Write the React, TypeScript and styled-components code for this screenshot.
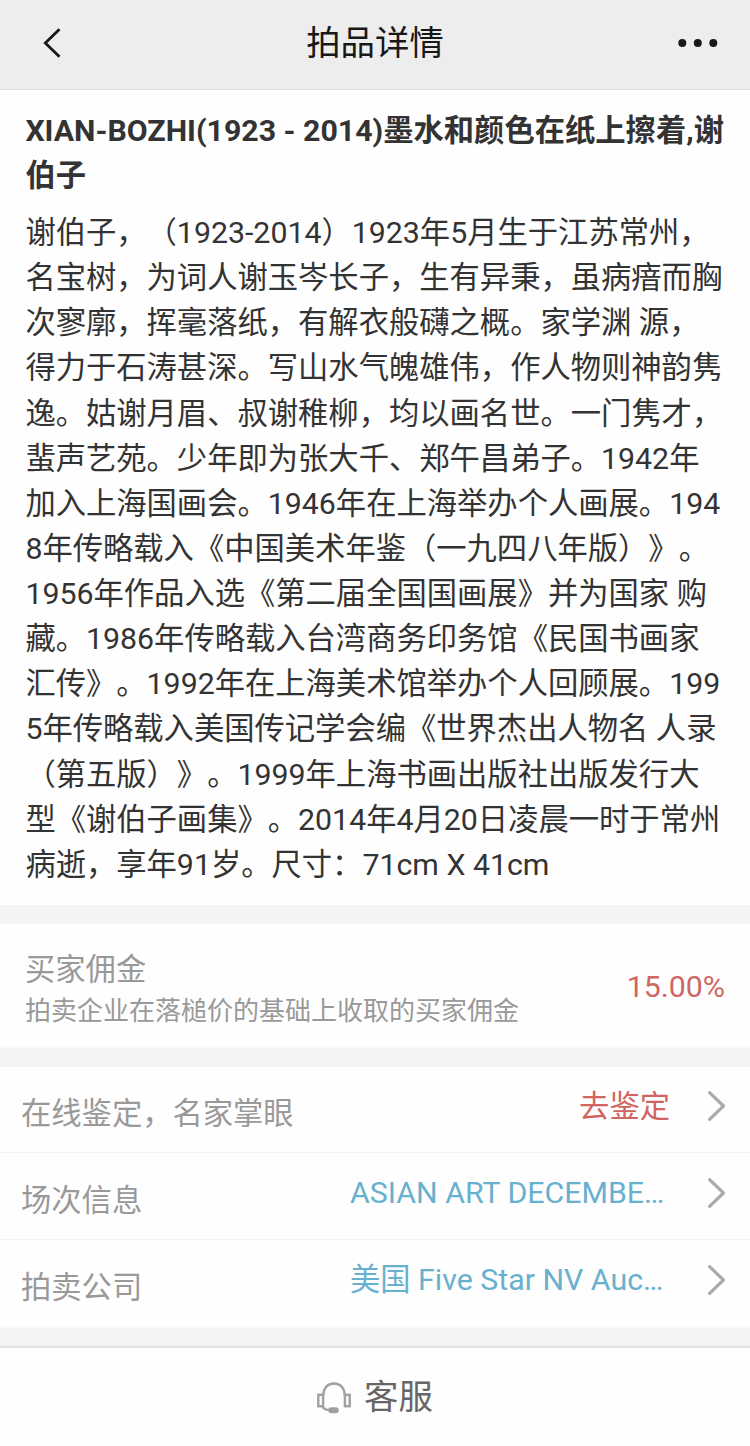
import React from "react";
import styled, { createGlobalStyle } from "styled-components";

const GlobalStyle = createGlobalStyle`
  * { box-sizing: border-box; }
  body {
    margin: 0;
    background: #ffffff;
    font-family: Roboto, "Noto Sans CJK SC", sans-serif;
    color: #333333;
    text-spacing-trim: space-all;
  }
`;

const Page = styled.div`
  display: flex;
  flex-direction: column;
  width: 750px;
  height: 1446px;
  overflow: hidden;
  background: #fefefe;
`;

const Header = styled.header`
  display: grid;
  grid-template-columns: 150px 1fr 150px;
  align-items: center;
  height: 90px;
  flex: none;
  padding-bottom: 4px;
  background: #ededed;
  border-bottom: 1px solid #e2e2e2;
`;

const HeaderTitle = styled.h1`
  margin: 0;
  font-size: 34.4px;
  line-height: 48px;
  font-weight: 400;
  text-align: center;
  color: #181818;
`;

const BackIcon = styled.svg`
  margin-left: 39px;
  display: block;
`;

const MoreIcon = styled.svg`
  justify-self: end;
  margin-right: 30px;
  display: block;
`;

const Article = styled.section`
  height: 815px;
  flex: none;
  padding: 18px 0 0 25.4px;
`;

const LotTitle = styled.h2`
  margin: 0 0 12px;
  font-size: 30.3px;
  line-height: 45px;
  font-weight: 700;
`;

const Description = styled.p`
  margin: 0;
  font-size: 30.3px;
  line-height: 45.12px;
`;

const Line = styled.span`
  display: block;
  white-space: pre;
`;

const Gap = styled.div<{ $size: number; $edge?: boolean }>`
  height: ${(p) => p.$size}px;
  flex: none;
  background: #f4f4f4;
  border-top: ${(p) => (p.$edge ? "2px solid #fafafa" : "0")};
`;

const Commission = styled.section`
  display: flex;
  align-items: center;
  justify-content: space-between;
  height: 122px;
  flex: none;
  padding: 3px 25px 0 25px;
`;

const CommissionText = styled.div`
  padding-top: 7px;
`;

const CommissionLabel = styled.div`
  font-size: 30.3px;
  line-height: 42px;
  color: #999999;
`;

const CommissionNote = styled.div`
  font-size: 26px;
  line-height: 40px;
  color: #999999;
`;

const Rate = styled.div`
  font-size: 30.3px;
  color: #cf6663;
`;

const Row = styled.div<{ $height: number; $last?: boolean }>`
  display: flex;
  align-items: center;
  height: ${(p) => p.$height}px;
  flex: none;
  padding: 0 24px 0 21px;
  border-bottom: ${(p) => (p.$last ? "0" : "1px solid #f5f5f5")};
`;

const RowLabel = styled.div`
  flex: 1;
  padding-top: 8px;
  font-size: 30.3px;
  line-height: 45px;
  color: #999999;
`;

const RowValue = styled.div<{ $tone: "red" | "blue" }>`
  padding-bottom: ${(p) => (p.$tone === "red" ? 7 : 8)}px;
  width: 320px;
  font-size: 30.3px;
  line-height: 45px;
  white-space: nowrap;
  text-align: ${(p) => (p.$tone === "red" ? "right" : "left")};
  color: ${(p) => (p.$tone === "red" ? "#d2635f" : "#68b0cf")};
`;

const Chevron = styled.svg`
  display: block;
  margin: 0 0 7px 36px;
`;

const Footer = styled.footer`
  display: flex;
  justify-content: center;
  align-items: center;
  gap: 12px;
  flex: 1;
  padding: 0 1px 6px 0;
  border-top: 2px solid #e3e3e3;
  font-size: 34.4px;
  color: #666666;
`;

const HeadsetIcon = styled.svg`
  display: block;
  margin-top: 6px;
`;

const descriptionLines = [
  "谢伯子，（1923-2014）1923年5月生于江苏常州，",
  "名宝树，为词人谢玉岑长子，生有异秉，虽病瘖而胸",
  "次寥廓，挥毫落纸，有解衣般礴之概。家学渊 源，",
  "得力于石涛甚深。写山水气魄雄伟，作人物则神韵隽",
  "逸。姑谢月眉、叔谢稚柳，均以画名世。一门隽才，",
  "蜚声艺苑。少年即为张大千、郑午昌弟子。1942年",
  "加入上海国画会。1946年在上海举办个人画展。194",
  "8年传略载入《中国美术年鉴（一九四八年版）》。",
  "1956年作品入选《第二届全国国画展》并为国家 购",
  "藏。1986年传略载入台湾商务印务馆《民国书画家",
  "汇传》。1992年在上海美术馆举办个人回顾展。199",
  "5年传略载入美国传记学会编《世界杰出人物名 人录",
  "（第五版）》。1999年上海书画出版社出版发行大",
  "型《谢伯子画集》。2014年4月20日凌晨一时于常州",
  "病逝，享年91岁。尺寸：71cm X 41cm",
];

const rows: { label: string; value: string; tone: "red" | "blue"; height: number }[] = [
  { label: "在线鉴定，名家掌眼", value: "去鉴定", tone: "red", height: 86 },
  { label: "场次信息", value: "ASIAN ART DECEMBE…", tone: "blue", height: 87 },
  { label: "拍卖公司", value: "美国 Five Star NV Auc…", tone: "blue", height: 86 },
];

export default function App() {
  return (
    <>
      <GlobalStyle />
      <Page lang="zh-CN">
        <Header>
          <BackIcon width="24" height="32" viewBox="0 0 24 32" fill="none" stroke="#181818" strokeWidth="2.8">
            <path d="M20.5 2.3 6.3 16 20.5 29.7" />
          </BackIcon>
          <HeaderTitle>拍品详情</HeaderTitle>
          <MoreIcon width="44" height="10" viewBox="0 0 44 10" fill="#181818">
            <circle cx="6.3" cy="5" r="4" />
            <circle cx="21.8" cy="5" r="4" />
            <circle cx="37.3" cy="5" r="4" />
          </MoreIcon>
        </Header>

        <Article>
          <LotTitle>
            <Line>XIAN-BOZHI(1923 - 2014)墨水和颜色在纸上擦着,谢</Line>
            <Line>伯子</Line>
          </LotTitle>
          <Description>
            {descriptionLines.map((line) => (
              <Line key={line}>{line}</Line>
            ))}
          </Description>
        </Article>

        <Gap $size={19} />
        <Commission>
          <CommissionText>
            <CommissionLabel>买家佣金</CommissionLabel>
            <CommissionNote>拍卖企业在落槌价的基础上收取的买家佣金</CommissionNote>
          </CommissionText>
          <Rate>15.00%</Rate>
        </Commission>

        <Gap $size={21} $edge />
        {rows.map((row, i) => (
          <Row key={row.label} $height={row.height} $last={i === rows.length - 1}>
            <RowLabel>{row.label}</RowLabel>
            <RowValue $tone={row.tone}>{row.value}</RowValue>
            <Chevron
              width="20"
              height="32"
              viewBox="0 0 20 32"
              fill="none"
              stroke="#aaaaaa"
              strokeWidth="3.2"
              strokeLinecap="round"
              strokeLinejoin="round"
            >
              <path d="M3.6 2.6 17.5 16 3.6 29.4" />
            </Chevron>
          </Row>
        ))}
        <Gap $size={20} $edge />

        <Footer>
          <HeadsetIcon width="36" height="33" viewBox="0 0 36 33" fill="none" stroke="#a0a0a0" strokeWidth="2.4">
            <rect x="2.3" y="13.8" width="4.8" height="11.4" />
            <rect x="28.9" y="13.8" width="4.8" height="11.4" />
            <path d="M7.3 14.5C7.3 7 11.5 2.5 18 2.500S28.700 7 28.700 14.500" />
            <path d="M6.5 25.5c1.200 2.600 4 3.600 8 3.600" />
            <rect x="13.5" y="27.500" width="8" height="3.600" rx="1.800" fill="#a0a0a0" />
          </HeadsetIcon>
          <span>客服</span>
        </Footer>
      </Page>
    </>
  );
}
